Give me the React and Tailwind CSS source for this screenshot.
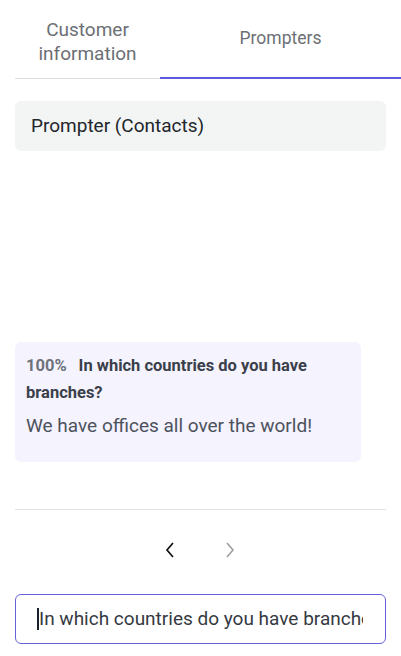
export default function App() {
  return (
    <div className="w-[401px] h-[656px] bg-white flex flex-col" style={{ fontFamily: "Roboto, 'Noto Sans', sans-serif" }}>
      <div className="flex ml-[15px] h-[79px]">
        <div className="w-[145px] border-b border-[#dedfe0] flex flex-col items-center pt-[18px] text-[19px] leading-[24px] text-[#6b6f75]">
          <span>Customer</span>
          <span>information</span>
        </div>
        <div className="flex-1 border-b-2 border-[#5a5adf] flex justify-center pt-[26px] text-[17.5px] leading-[24px] text-[#6b6f75]">
          Prompters
        </div>
      </div>
      <div className="mx-[15px] mt-[22px] h-[50px] rounded-md bg-[#f3f4f4] flex items-center px-4 text-[19px] text-[#22262b]">
        Prompter (Contacts)
      </div>
      <div className="ml-[15px] mt-[191px] w-[346px] h-[120px] rounded-md bg-[#f4f3fe] px-[11px] pt-[10px]">
        <div className="text-[16.5px] leading-[27px] font-bold text-[#3b3f4a]">
          <span className="text-[#6e737b] mr-[12px]">100%</span>In which countries do you have branches?
        </div>
        <div className="mt-[6px] text-[19px] leading-[28px] text-[#4d525c]">We have offices all over the world!</div>
      </div>
      <div className="mx-[15px] mt-[47px] border-t border-[#e2e3e4]"></div>
      <div className="flex justify-center gap-[44px] mt-[31px] h-[18px] items-center">
        <svg width="16" height="18" viewBox="0 0 16 18" className="ml-[-2px]">
          <path d="M11 2 L5 9 L11 16" fill="none" stroke="#111" strokeWidth="1.7" />
        </svg>
        <svg width="16" height="18" viewBox="0 0 16 18">
          <path d="M5 2 L11 9 L5 16" fill="none" stroke="#9a9ca0" strokeWidth="1.5" />
        </svg>
      </div>
      <div className="mx-[15px] mt-[35px] h-[50px] rounded-md border border-[#6462d6] flex items-center pl-[21px] pr-[22px] overflow-hidden">
        <span className="w-[2px] h-[22px] bg-[#16202a] shrink-0"></span>
        <span className="whitespace-nowrap overflow-hidden text-[19px] text-[#353a42]">In which countries do you have branches?</span>
      </div>
    </div>
  );
}
